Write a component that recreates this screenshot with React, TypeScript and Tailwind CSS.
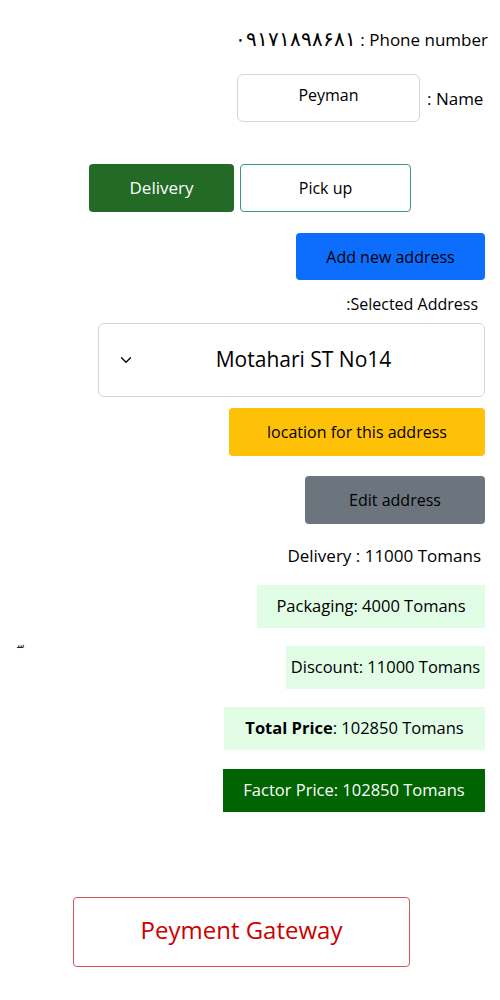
import React from 'react';
import { ChevronDown } from 'lucide-react';

const PriceBox = ({ children, className }: { children: React.ReactNode; className: string }) => (
  <div className={`h-[43px] flex items-center justify-center text-[16.5px] ${className}`}>{children}</div>
);

const App = () => {
  return (
    <div className="w-[500px] h-[1000px] bg-white text-black font-['Open_Sans',sans-serif] flex flex-col">
      <div className="flex justify-end items-baseline pr-[12px] pt-[27px] text-[17px] leading-[24px]">
        <span className="text-[20px] tracking-[2px]">۰۹۱۷۱۸۹۸۶۸۱</span>
        <span>&nbsp;: Phone number</span>
      </div>

      <div className="flex items-center mt-[22px] pl-[237px]">
        <div className="w-[183px] h-[48px] border border-gray-300 rounded-md flex items-center justify-center text-[16px] pb-[6px]">
          Peyman
        </div>
        <span className="ml-[7px] text-[17px] pt-[2px]">: Name</span>
      </div>

      <div className="flex mt-[42px] pl-[89px] gap-[6px]">
        <button className="w-[145px] h-[48px] rounded-[4px] bg-[#226a26] text-white text-[17px]">Delivery</button>
        <button className="w-[171px] h-[48px] rounded-[4px] border border-[#3a9a6e] text-[16px]">Pick up</button>
      </div>

      <div className="flex flex-col items-end pr-[15px]">
        <button className="mt-[21px] w-[189px] h-[47px] rounded-[4px] bg-[#0d6efd] text-[16px]">Add new address</button>
        <div className="mt-[13px] pr-[7px] text-[16px] leading-[22px]">:Selected Address</div>
        <div className="mt-[8px] w-[387px] h-[74px] border border-gray-300 rounded-md flex items-center px-[18px]">
          <ChevronDown className="w-[18px] h-[18px]" strokeWidth={1.75} />
          <span className="flex-1 text-center text-[21px] pl-[6px]">Motahari ST No14</span>
        </div>
        <button className="mt-[11px] w-[256px] h-[48px] rounded-[4px] bg-[#ffc107] text-[16px]">location for this address</button>
        <button className="mt-[20px] w-[180px] h-[48px] rounded-[4px] bg-[#6c757d] text-[16px]">Edit address</button>
        <div className="mt-[20px] pr-[4px] text-[17px] leading-[24px]">Delivery : 11000 Tomans</div>
      </div>

      <div className="flex flex-col items-end pr-[15px] relative">
        <PriceBox className="mt-[17px] w-[228px] bg-[#e1fde6]">Packaging: 4000 Tomans</PriceBox>
        <span className="absolute left-[17px] top-[70px] text-[9px]">ﺳ</span>
        <PriceBox className="mt-[18px] w-[199px] bg-[#e1fde6]">Discount: 11000 Tomans</PriceBox>
        <PriceBox className="mt-[18px] w-[261px] bg-[#e1fde6]">
          <span className="font-bold">Total Price</span>: 102850 Tomans
        </PriceBox>
        <PriceBox className="mt-[19px] w-[262px] bg-[#006400] text-white">Factor Price: 102850 Tomans</PriceBox>
      </div>

      <div className="pl-[73px] mt-[85px]">
        <button className="w-[337px] h-[70px] rounded-[4px] border border-[#d9535f] text-[#cc0000] text-[24px] pb-[4px]">
          Peyment Gateway
        </button>
      </div>
    </div>
  );
};

export default App;
